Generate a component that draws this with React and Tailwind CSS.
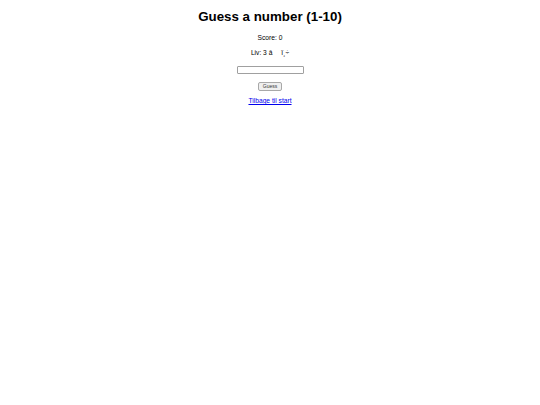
export default function App() {
  return (
    <div className="w-[540px] h-[405px] bg-white flex flex-col items-center text-black" style={{ fontFamily: '"Liberation Sans", Arial, sans-serif' }}>
      <h1 className="mt-[9px] text-[13.33px] leading-[15px] font-bold">Guess a number (1-10)</h1>
      <p className="mt-[10px] text-[6.67px] leading-[8px]">Score: 0</p>
      <p className="mt-[7px] text-[6.67px] leading-[8px]">Liv: 3 â<span className="inline-block w-[9px]"></span>ï¸<span className="text-[6.67px]">÷</span></p>
      <input className="mt-[9px] w-[67px] h-[8px] border border-[#a0a0a0] rounded-[1px] bg-white" />
      <button className="mt-[8px] px-[4px] h-[9px] text-[5px] leading-[7px] border border-[#a8a8a8] rounded-[2px] bg-[#efefef] text-[#333]">Guess</button>
      <a href="#" className="mt-[6px] text-[6.67px] leading-[8px] text-[#0000ee] underline">Tilbage til start</a>
    </div>
  );
}
